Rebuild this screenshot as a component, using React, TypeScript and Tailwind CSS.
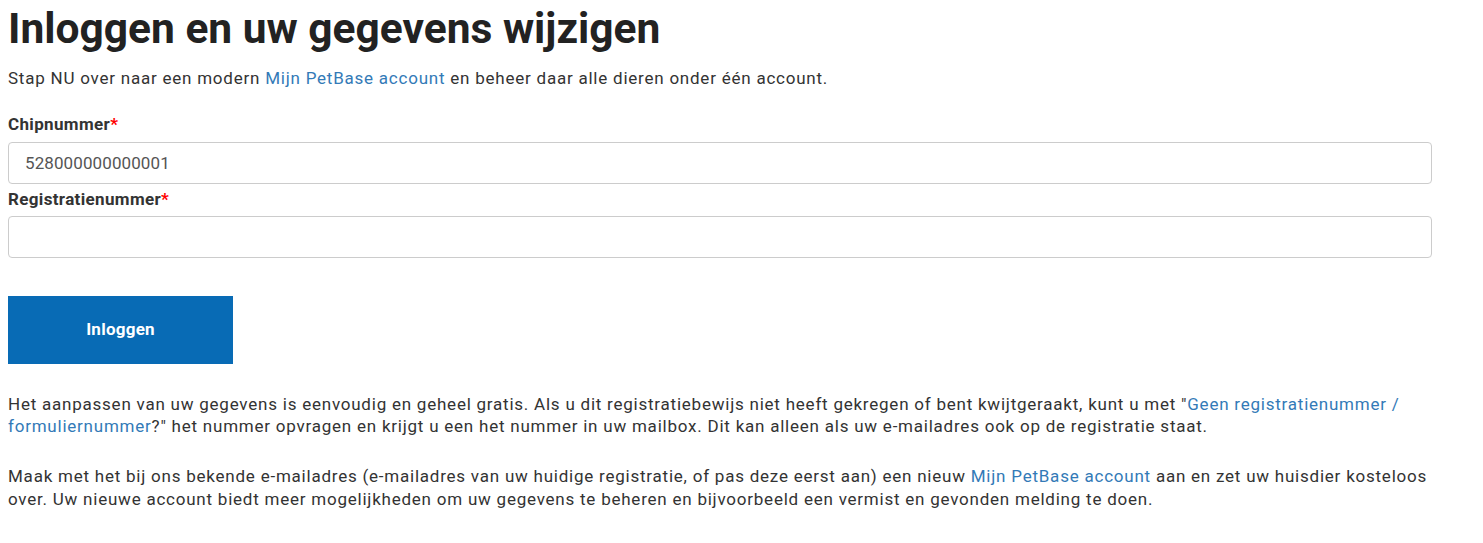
export default function App() {
  return (
    <div className="bg-white min-h-screen px-2 font-['Roboto',sans-serif] text-[17px] tracking-[0.77px] leading-[22.86px] text-[#333]">
      <div className="w-[1424px]">
        <h1 className="mt-[6px] text-[42.5px] leading-[1.1] tracking-normal font-bold text-[#222]">
          Inloggen en uw gegevens wijzigen
        </h1>
        <p className="mt-[14px]">
          Stap NU over naar een modern{" "}
          <a href="#" className="text-[#337ab7]">Mijn PetBase account</a> en beheer daar alle dieren onder één account.
        </p>

        <form className="mt-[24px]">
          <label className="block font-bold tracking-[0.35px] leading-[20px] mb-[8px]">
            Chipnummer<span className="text-[#ff0000]">*</span>
          </label>
          <input
            type="text"
            defaultValue="528000000000001"
            className="block w-full h-[42px] px-4 border border-[#ccc] rounded-[4px] text-[#555] text-[17px] tracking-[0.1px] outline-none mb-[5px]"
          />
          <label className="block font-bold tracking-[0.35px] leading-[20px] mb-[7px]">
            Registratienummer<span className="text-[#ff0000]">*</span>
          </label>
          <input
            type="text"
            className="block w-full h-[42px] px-4 border border-[#ccc] rounded-[4px] text-[#555] text-[17px] outline-none"
          />
          <button
            type="button"
            className="mt-[38px] w-[225px] h-[68px] bg-[#086bb5] text-white font-bold tracking-[0.25px]"
          >
            Inloggen
          </button>
        </form>

        <p className="mt-[29px] mb-[27px]">
          Het aanpassen van uw gegevens is eenvoudig en geheel gratis. Als u dit registratiebewijs niet heeft gekregen of bent kwijtgeraakt, kunt u met "
          <a href="#" className="text-[#337ab7]">Geen registratienummer / formuliernummer</a>?" het nummer opvragen en krijgt u een het nummer in uw mailbox. Dit kan alleen als uw e-mailadres ook op de registratie staat.
        </p>
        <p>
          Maak met het bij ons bekende e-mailadres (e-mailadres van uw huidige registratie, of pas deze eerst aan) een nieuw{" "}
          <a href="#" className="text-[#337ab7]">Mijn PetBase account</a> aan en zet uw huisdier kosteloos over. Uw nieuwe account biedt meer mogelijkheden om uw gegevens te beheren en bijvoorbeeld een vermist en gevonden melding te doen.
        </p>
      </div>
    </div>
  );
}
